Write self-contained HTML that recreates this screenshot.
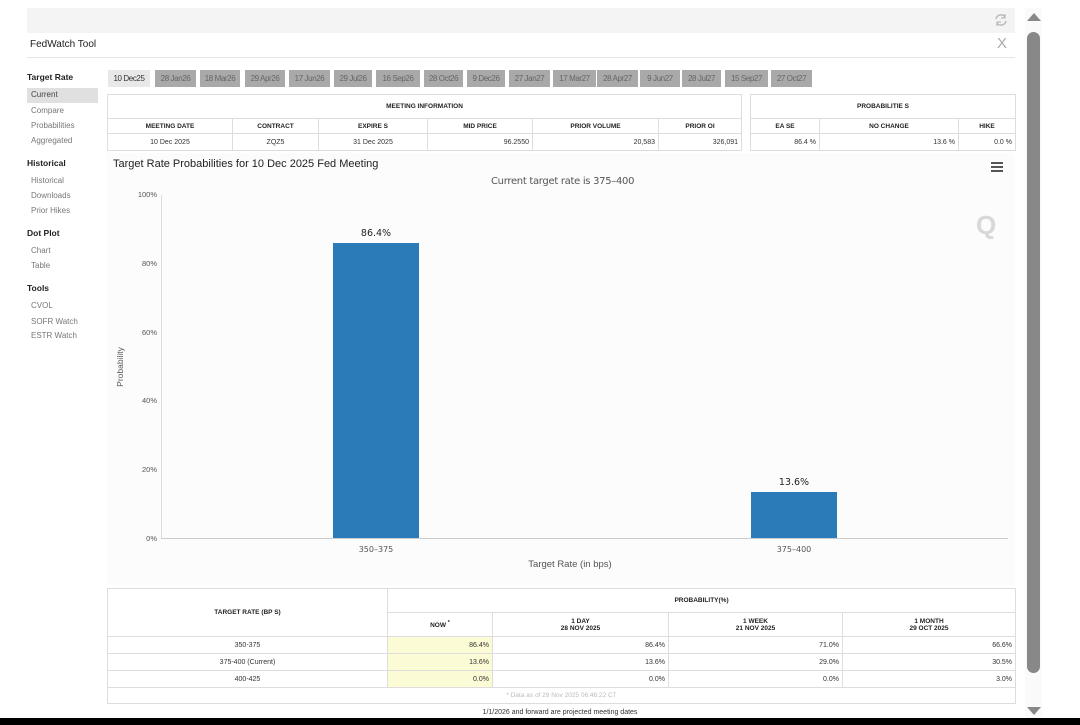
<!DOCTYPE html>
<html><head><meta charset="utf-8"><style>
*{margin:0;padding:0;box-sizing:border-box}
body{width:1080px;height:725px;background:#fff;font-family:"Liberation Sans",Arial,sans-serif;position:relative;overflow:hidden;color:#333}
.a{position:absolute}
.side div{position:absolute;left:31px;font-size:8px;color:#777}
.side b{position:absolute;left:27px;font-size:8.5px;color:#222}
.tab{position:absolute;top:70px;height:17px;background:#a9a9a9;color:#666;font-size:8px;line-height:17px;text-align:center;letter-spacing:-0.4px;white-space:nowrap;overflow:hidden}
table{border-collapse:collapse;position:absolute;font-size:7px;table-layout:fixed}
td{border:1px solid #ddd;padding:0 3px}
.h td{font-weight:bold;text-align:center;font-size:6.5px;color:#222}
.r{text-align:right}.c{text-align:center}
</style></head><body>
<div class="a" style="left:27px;top:8px;width:988px;height:25px;background:#f4f4f4"></div>
<svg class="a" style="left:993px;top:12px" width="16" height="16" viewBox="0 0 16 16"><path d="M3 7a5 5 0 0 1 9-2M13 9a5 5 0 0 1-9 2" stroke="#bbb" stroke-width="1.5" fill="none"/><path d="M12 2v4h-4M4 14v-4h4" stroke="#bbb" stroke-width="1.3" fill="none"/></svg>
<div class="a" style="left:30px;top:39px;font-size:10px;color:#222">FedWatch Tool</div>
<div class="a" style="left:997px;top:35px;font-size:15px;color:#aaa">X</div>
<div class="a" style="left:27px;top:57px;width:988px;height:1px;background:#e5e5e5"></div>
<div class="side">
<b style="top:72px">Target Rate</b>
<div style="left:27px;top:88px;width:71px;height:15px;background:#e0e0e0"></div>
<div style="top:90px;color:#444">Current</div>
<div style="top:106px">Compare</div>
<div style="top:121px">Probabilities</div>
<div style="top:136px">Aggregated</div>
<b style="top:158px">Historical</b>
<div style="top:176px">Historical</div>
<div style="top:191px">Downloads</div>
<div style="top:206px">Prior Hikes</div>
<b style="top:228px">Dot Plot</b>
<div style="top:246px">Chart</div>
<div style="top:261px">Table</div>
<b style="top:283px">Tools</b>
<div style="top:301px">CVOL</div>
<div style="top:317px">SOFR Watch</div>
<div style="top:331px">ESTR Watch</div>
</div>
<div class="tab" style="left:108px;width:42px;background:#e8e8e8;color:#333">10 Dec25</div>
<div class="tab" style="left:155px;width:41px">28 Jan26</div>
<div class="tab" style="left:200px;width:40px">18 Mar26</div>
<div class="tab" style="left:245px;width:40px">29 Apr26</div>
<div class="tab" style="left:289px;width:41px">17 Jun26</div>
<div class="tab" style="left:334px;width:38px">29 Jul26</div>
<div class="tab" style="left:376px;width:44px">16 Sep26</div>
<div class="tab" style="left:424px;width:39px">28 Oct26</div>
<div class="tab" style="left:467px;width:38px">9 Dec26</div>
<div class="tab" style="left:509px;width:41px">27 Jan27</div>
<div class="tab" style="left:553px;width:43px">17 Mar27</div>
<div class="tab" style="left:597px;width:41px">28 Apr27</div>
<div class="tab" style="left:640px;width:40px">9 Jun27</div>
<div class="tab" style="left:682px;width:39px">28 Jul27</div>
<div class="tab" style="left:725px;width:43px">15 Sep27</div>
<div class="tab" style="left:771px;width:41px">27 Oct27</div>

<table style="left:107px;top:94px;width:634px">
<colgroup><col style="width:125px"><col style="width:86px"><col style="width:109px"><col style="width:105px"><col style="width:126px"><col style="width:83px"></colgroup>
<tr class="h" style="height:24px"><td colspan="6">MEETING INFORMATION</td></tr>
<tr class="h" style="height:15px"><td>MEETING DATE</td><td>CONTRACT</td><td>EXPIRE S</td><td>MID PRICE</td><td>PRIOR VOLUME</td><td>PRIOR OI</td></tr>
<tr style="height:17px"><td class="c">10 Dec 2025</td><td class="c">ZQZ5</td><td class="c">31 Dec 2025</td><td class="r">96.2550</td><td class="r">20,583</td><td class="r">326,091</td></tr>
</table>
<table style="left:750px;top:94px;width:265px">
<colgroup><col style="width:69px"><col style="width:139px"><col style="width:57px"></colgroup>
<tr class="h" style="height:24px"><td colspan="3">PROBABILITIE S</td></tr>
<tr class="h" style="height:15px"><td>EA SE</td><td>NO CHANGE</td><td>HIKE</td></tr>
<tr style="height:17px"><td class="r">86.4 %</td><td class="r">13.6 %</td><td class="r">0.0 %</td></tr>
</table>

<div class="a" style="left:107px;top:153px;width:908px;height:432px;background:#fcfcfc"></div>
<div class="a" style="left:113px;top:158px;font-size:11px;color:#222">Target Rate Probabilities for 10 Dec 2025 Fed Meeting</div>
<div class="a" style="left:991px;top:162px;width:12px;height:2px;background:#555;box-shadow:0 4px 0 #555,0 8px 0 #555"></div>
<div class="a" style="left:491px;top:176px;font-size:10px;color:#555;font-family:'DejaVu Sans',sans-serif;letter-spacing:-0.3px">Current target rate is 375–400</div>
<div class="a" style="left:976px;top:210px;font-size:26px;font-weight:bold;color:#d8d8d8">Q</div>
<div class="a" style="left:161px;top:195px;width:1px;height:344px;background:#ddd"></div>
<div class="a" style="left:161px;top:538px;width:847px;height:1px;background:#ccc"></div>
<div class="a" style="left:120px;top:190px;font-size:7.5px;color:#555;width:37px;text-align:right">100%</div>
<div class="a" style="left:120px;top:259px;font-size:7.5px;color:#555;width:37px;text-align:right">80%</div>
<div class="a" style="left:120px;top:328px;font-size:7.5px;color:#555;width:37px;text-align:right">60%</div>
<div class="a" style="left:120px;top:396px;font-size:7.5px;color:#555;width:37px;text-align:right">40%</div>
<div class="a" style="left:120px;top:465px;font-size:7.5px;color:#555;width:37px;text-align:right">20%</div>
<div class="a" style="left:120px;top:534px;font-size:7.5px;color:#555;width:37px;text-align:right">0%</div>
<div class="a" style="left:95px;top:362px;font-size:8.5px;color:#555;transform:rotate(-90deg);width:50px;text-align:center">Probability</div>
<div class="a" style="left:333px;top:243px;width:86px;height:295px;background:#2b7bb9"></div>
<div class="a" style="left:751px;top:492px;width:86px;height:46px;background:#2b7bb9"></div>
<div class="a" style="left:333px;top:228px;width:86px;text-align:center;font-size:9.5px;color:#222;font-family:'DejaVu Sans',sans-serif">86.4%</div>
<div class="a" style="left:751px;top:477px;width:86px;text-align:center;font-size:9.5px;color:#222;font-family:'DejaVu Sans',sans-serif">13.6%</div>
<div class="a" style="left:333px;top:545px;width:86px;text-align:center;font-size:8px;color:#555;font-family:'DejaVu Sans',sans-serif">350–375</div>
<div class="a" style="left:751px;top:545px;width:86px;text-align:center;font-size:8px;color:#555;font-family:'DejaVu Sans',sans-serif">375–400</div>
<div class="a" style="left:500px;top:559px;width:140px;text-align:center;font-size:9.5px;color:#555">Target Rate (in bps)</div>

<table style="left:107px;top:588px;width:908px">
<colgroup><col style="width:280px"><col style="width:105px"><col style="width:176px"><col style="width:174px"><col style="width:173px"></colgroup>
<tr class="h" style="height:24px"><td rowspan="2">TARGET RATE (BP S)</td><td colspan="4">PROBABILITY(%)</td></tr>
<tr class="h" style="height:24px"><td>NOW <sup>*</sup></td><td>1 DAY<br>28 NOV 2025</td><td>1 WEEK<br>21 NOV 2025</td><td>1 MONTH<br>29 OCT 2025</td></tr>
<tr style="height:17px"><td class="c">350-375</td><td class="r" style="background:#fbfbd6">86.4%</td><td class="r">86.4%</td><td class="r">71.0%</td><td class="r">66.6%</td></tr>
<tr style="height:17px"><td class="c">375-400 (Current)</td><td class="r" style="background:#fbfbd6">13.6%</td><td class="r">13.6%</td><td class="r">29.0%</td><td class="r">30.5%</td></tr>
<tr style="height:17px"><td class="c">400-425</td><td class="r" style="background:#fbfbd6">0.0%</td><td class="r">0.0%</td><td class="r">0.0%</td><td class="r">3.0%</td></tr>
<tr style="height:16px"><td colspan="5" class="c" style="color:#bbb;font-size:6.5px">* Data as of 29 Nov 2025 06:46:22 CT</td></tr>
</table>
<div class="a" style="left:400px;top:709px;width:320px;text-align:center;font-size:7px;color:#333">1/1/2026 and forward are projected meeting dates</div>

<div class="a" style="left:1025px;top:8px;width:17px;height:710px;background:#fafafa"></div>
<div class="a" style="left:1027px;top:13px;width:0;height:0;border-left:7px solid transparent;border-right:7px solid transparent;border-bottom:8px solid #888"></div>
<div class="a" style="left:1027px;top:32px;width:13px;height:641px;background:#888;border-radius:7px"></div>
<div class="a" style="left:1027px;top:707px;width:0;height:0;border-left:7px solid transparent;border-right:7px solid transparent;border-top:8px solid #888"></div>
<div class="a" style="left:0;top:718px;width:1080px;height:7px;background:#000"></div>
</body></html>
